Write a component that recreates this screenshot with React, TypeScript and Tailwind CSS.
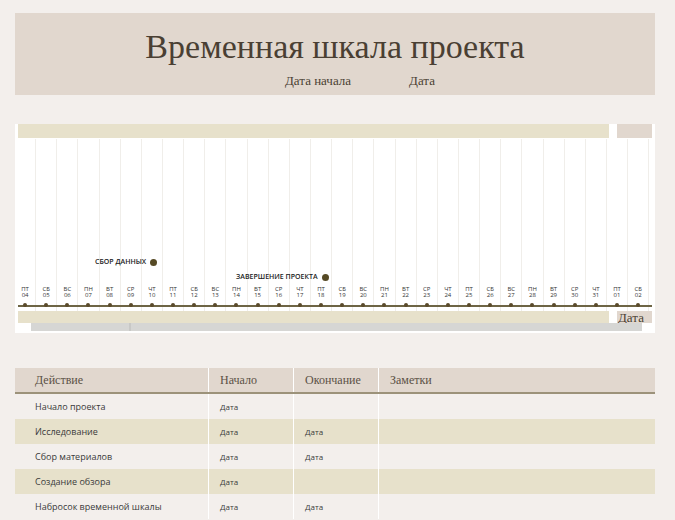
import React from "react";

const days = [
  ["ПТ","04"],["СБ","05"],["ВС","06"],["ПН","07"],["ВТ","08"],["СР","09"],["ЧТ","10"],["ПТ","11"],["СБ","12"],["ВС","13"],
  ["ПН","14"],["ВТ","15"],["СР","16"],["ЧТ","17"],["ПТ","18"],["СБ","19"],["ВС","20"],["ПН","21"],["ВТ","22"],["СР","23"],
  ["ЧТ","24"],["ПТ","25"],["СБ","26"],["ВС","27"],["ПН","28"],["ВТ","29"],["СР","30"],["ЧТ","31"],["ПТ","01"],["СБ","02"],
];

const rows = [
  ["Начало проекта","Дата",""],
  ["Исследование","Дата","Дата"],
  ["Сбор материалов","Дата","Дата"],
  ["Создание обзора","Дата",""],
  ["Набросок временной шкалы","Дата","Дата"],
];

const sans = { fontFamily: "'Open Sans','Noto Sans',sans-serif" };
const serif = { fontFamily: "'Liberation Serif','DejaVu Serif',serif" };

export default function App() {
  return (
    <div className="w-[675px] h-[520px] bg-[#f3efec] overflow-hidden pt-[13px] px-[15px] pr-[20px]" style={sans}>
      <div className="h-[82px] bg-[#e1d7ce] flex flex-col items-center" style={serif}>
        <div className="text-[34px] text-[#4a3f33] mt-[14px] leading-[40px]">Временная шкала проекта</div>
        <div className="flex gap-[58px] text-[13px] text-[#4a3f33] mt-[4px] ml-[50px]">
          <span>Дата начала</span><span>Дата</span>
        </div>
      </div>

      <div className="mt-[29px] h-[209px] bg-white relative">
        <div className="flex h-[14px] mt-[1px] px-[3px] gap-[8px]">
          <div className="flex-1 bg-[#e7e1cb]" />
          <div className="w-[35px] bg-[#e1d7ce]" />
        </div>
        <div className="absolute left-0 right-[6px] top-[15px] h-[181px] flex">
          {days.map((d, i) => (
            <div key={i} className="flex-1 border-r border-[#f0eeea] flex flex-col items-center justify-end">
              <div className="text-[6px] leading-[6px] text-[#333] text-center">{d[0]}<br />{d[1]}</div>
              <div className="relative z-10 w-[4px] h-[4px] rounded-full bg-[#5a4a2a] mt-[5px] mb-[13px]" />
            </div>
          ))}
        </div>
        <div className="absolute left-[3px] right-[3px] top-[181px] h-[2px] bg-[#6e6545]" />
        <div className="absolute left-[80px] top-[133px] flex items-center gap-[4px] text-[7px] font-semibold text-[#222]">
          СБОР ДАННЫХ <span className="w-[7px] h-[7px] rounded-full bg-[#564a25]" />
        </div>
        <div className="absolute left-[221px] top-[148px] flex items-center gap-[4px] text-[7px] font-semibold text-[#222]">
          ЗАВЕРШЕНИЕ ПРОЕКТА <span className="w-[7px] h-[7px] rounded-full bg-[#564a25]" />
        </div>
        <div className="absolute left-[3px] right-[3px] top-[187px] h-[12px] flex gap-[8px]">
          <div className="flex-1 bg-[#e7e1cb]" />
          <div className="w-[35px] bg-[#e1d7ce] text-[13px] leading-[14px] text-[#4a3f33] pl-[1px]" style={serif}>Дата</div>
        </div>
        <div className="absolute left-[3px] right-[3px] top-[199px] h-[8px] flex bg-[#d6d6d4]">
          <div className="w-[13px] bg-white" />
          <div className="w-[100px] border-r-2 border-[#c8c8c6]" />
          <div className="flex-1" />
          <div className="w-[10px] bg-white" />
        </div>
      </div>

      <div className="mt-[35px] text-[#3a3a3a]">
        <div className="flex h-[26px] bg-[#e1d7ce] border-b-2 border-[#9c927a] text-[12px] text-[#5b5145] items-center" style={serif}>
          <div className="w-[194px] pl-[20px] border-r border-white h-full flex items-center">Действие</div>
          <div className="w-[85px] pl-[11px] border-r border-white h-full flex items-center">Начало</div>
          <div className="w-[85px] pl-[11px] border-r border-white h-full flex items-center">Окончание</div>
          <div className="flex-1 pl-[11px]">Заметки</div>
        </div>
        {rows.map((r, i) => (
          <div key={i} className={`flex h-[25px] text-[9px] items-center ${i % 2 === 1 ? "bg-[#e7e1cb]" : ""}`}>
            <div className="w-[194px] pl-[20px] border-r border-white h-full flex items-center">{r[0]}</div>
            <div className="w-[85px] pl-[11px] border-r border-white h-full flex items-center text-[8px]">{r[1]}</div>
            <div className="w-[85px] pl-[11px] border-r border-white h-full flex items-center text-[8px]">{r[2]}</div>
            <div className="flex-1" />
          </div>
        ))}
      </div>
    </div>
  );
}
